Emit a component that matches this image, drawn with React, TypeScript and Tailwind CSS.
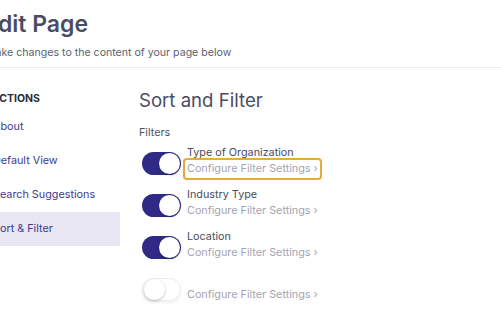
import React from "react";

const filters = [
  { label: "Type of Organization", on: true, focused: true },
  { label: "Industry Type", on: true, focused: false },
  { label: "Location", on: true, focused: false },
  { label: "", on: false, focused: false },
];

function Toggle({ on }: { on: boolean }) {
  return (
    <div
      className={
        on
          ? "mt-[2px] w-[39px] h-[23px] rounded-full bg-[#2f2a86] flex items-center justify-end px-[1px] shrink-0"
          : "mt-[2px] w-[39px] h-[23px] rounded-full bg-white border border-[#ececf0] flex items-center justify-start px-[1px] shrink-0 shadow-[0_2px_3px_rgba(0,0,0,0.06)]"
      }
    >
      <div className="w-[21px] h-[21px] rounded-full bg-white shadow-[0_1px_3px_rgba(0,0,0,0.25)]" />
    </div>
  );
}

export default function App() {
  return (
    <div className="w-[501px] h-[318px] overflow-hidden bg-white font-['Inter',sans-serif]">
      <div className="-ml-[14px] pt-[9px]">
        <h1 className="-ml-[2px] text-[23px] leading-[30px] font-semibold text-[#4a4c63]">Edit Page</h1>
        <p className="mt-[7px] text-[10.6px] leading-[14px] text-[#5c5f70]">
          Make changes to the content of your page below
        </p>
      </div>
      <hr className="mt-[7px] border-t border-[#ececef]" />

      <div className="flex">
        <div className="w-[134px] -ml-[14px] shrink-0 pt-[24px]">
          <div className="text-[10.5px] leading-[14px] font-bold text-[#2b2d3a] mb-[4px]">SECTIONS</div>
          <div className="flex flex-col text-[10.8px] text-[#3d3a8c]">
            <div className="h-[34px] flex items-center pl-[7px]">About</div>
            <div className="h-[34px] flex items-center pl-[7px]">Default View</div>
            <div className="h-[34px] flex items-center pl-[7px]">Search Suggestions</div>
            <div className="h-[34px] flex items-center pl-[7px] bg-[#e7e6f2]">Sort &amp; Filter</div>
          </div>
        </div>

        <div className="ml-[19px] pt-[20px]">
          <h2 className="text-[18.6px] leading-[24px] text-[#4a4c63]">Sort and Filter</h2>
          <div className="mt-[14px] text-[10.8px] leading-[14px] text-[#4f5264]">Filters</div>
          <div className="mt-[4px] flex flex-col gap-[6px]">
            {filters.map((f, i) => (
              <div key={i} className="flex items-center gap-[6px] pl-[3px]">
                <Toggle on={f.on} />
                <div className="flex flex-col">
                  <div className="h-[14px] text-[10.8px] leading-[18px] text-[#4a4c60]">{f.label}</div>
                  <div
                    className={
                      f.focused
                        ? "-ml-[4px] px-[2px] h-[22px] flex items-center border-2 border-[#e9a93b] rounded-[4px] text-[10.8px] text-[#a3a5b3]"
                        : "-ml-[4px] px-[2px] h-[22px] flex items-center border-2 border-transparent text-[10.8px] text-[#a3a5b3]"
                    }
                  >
                    Configure Filter Settings ›
                  </div>
                </div>
              </div>
            ))}
          </div>
        </div>
      </div>
    </div>
  );
}
